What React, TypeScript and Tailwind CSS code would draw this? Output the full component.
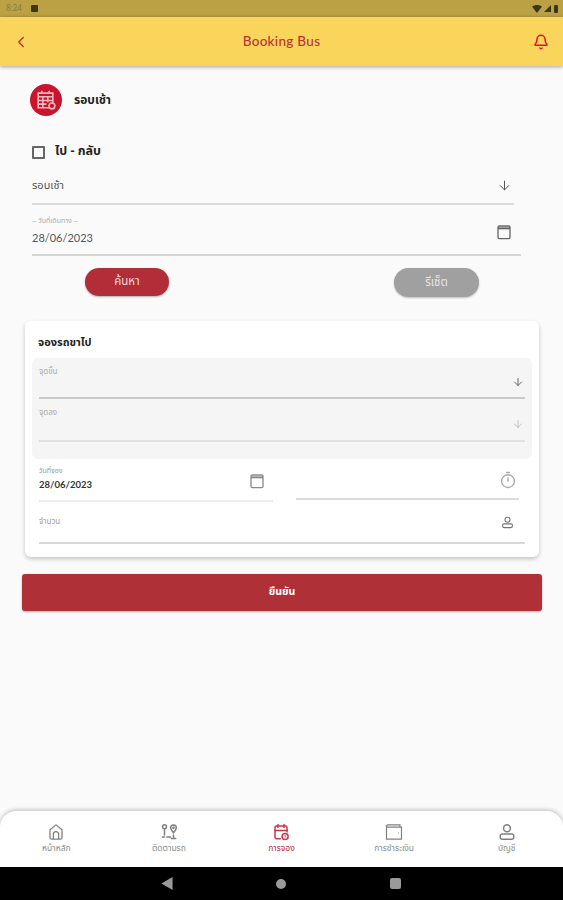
import { ArrowDown, Bell, ChevronLeft } from 'lucide-react'

const THAI = 'font-["Noto_Sans_Thai","Noto_Sans","Liberation_Sans","DejaVu_Sans",sans-serif]'

type IconProps = { className?: string }

function BookingIcon({ className }: IconProps) {
  return (
    <svg viewBox="0 0 24 24" fill="none" stroke="currentColor" strokeWidth="2" strokeLinecap="round" className={className}>
      <path d="M11 21H6a2 2 0 0 1-2-2V6a2 2 0 0 1 2-2h12a2 2 0 0 1 2 2v6" />
      <path d="M4 10h16M8 2v4M16 2v4" />
      <circle cx="17.5" cy="18" r="4" />
      <path d="M17.5 16.4v1.8l1.1.6" strokeWidth="1.3" />
    </svg>
  )
}

function SheetIcon({ className }: IconProps) {
  return (
    <svg viewBox="0 0 24 24" fill="none" stroke="currentColor" strokeWidth="1.7" className={className}>
      <path d="M3.5 4.5h16v16h-16z" />
      <path d="M3.5 8.5h16M3.5 12.5h16M3.5 16.5h9M8.5 8.5v12M14 8.5v6" />
      <path d="M7.5 2v3M15.5 2v3" />
      <circle cx="18.5" cy="18.5" r="3.2" fill="#c8142c" />
    </svg>
  )
}

function RouteIcon({ className }: IconProps) {
  return (
    <svg viewBox="0 0 24 24" fill="none" stroke="currentColor" strokeWidth="2" strokeLinecap="round" className={className}>
      <circle cx="6" cy="5" r="2.6" />
      <path d="M6 9v7" />
      <path d="M3 18.5h3M9 18.5h5" />
      <path d="M18 13c-2.6-3-3.8-4.6-3.8-6.6a3.8 3.8 0 0 1 7.6 0c0 2-1.2 3.6-3.8 6.6z" />
      <circle cx="18" cy="6.4" r="0.8" />
      <path d="M18 16v2.5M15 20.5h6" />
    </svg>
  )
}

function HomeIcon({ className }: IconProps) {
  return (
    <svg viewBox="0 0 24 24" fill="none" stroke="currentColor" strokeWidth="1.7" strokeLinejoin="round" className={className}>
      <path d="M12 2.5 4 9v10.5a2 2 0 0 0 2 2h12a2 2 0 0 0 2-2V9z" />
      <path d="M8.5 21.5V15a3.5 3.5 0 0 1 7 0v6.5" />
    </svg>
  )
}

function WalletIcon({ className }: IconProps) {
  return (
    <svg viewBox="0 0 24 24" fill="none" stroke="currentColor" strokeWidth="1.6" className={className}>
      <path d="M2 5.5h20v16H2z" />
      <path d="M2 5.5V4a1.5 1.5 0 0 1 1.5-1.5H20V5.5" />
      <path d="M17.5 13.5h.8" strokeWidth="1.8" />
    </svg>
  )
}

function PersonIcon({ className }: IconProps) {
  return (
    <svg viewBox="0 0 24 24" fill="none" stroke="currentColor" strokeWidth="2" className={className}>
      <circle cx="12" cy="7" r="4.6" />
      <path d="M5.5 14.5h13a2.5 2.5 0 0 1 2.5 2.5v1.5a3 3 0 0 1-3 3H6a3 3 0 0 1-3-3V17a2.5 2.5 0 0 1 2.5-2.5z" />
    </svg>
  )
}

function CalendarIcon({ className }: IconProps) {
  return (
    <svg viewBox="0 0 24 24" fill="none" stroke="currentColor" strokeWidth="2" className={className}>
      <path d="M5 3h14a2 2 0 0 1 2 2v15a2 2 0 0 1-2 2H5a2 2 0 0 1-2-2V5a2 2 0 0 1 2-2z" />
      <path d="M3 6.5h18" strokeWidth="3" />
    </svg>
  )
}

function StopwatchIcon({ className }: IconProps) {
  return (
    <svg viewBox="0 0 24 24" fill="none" stroke="currentColor" strokeWidth="1.8" strokeLinecap="round" className={className}>
      <circle cx="12" cy="13.5" r="8.5" />
      <path d="M10 2h4M12 9v4.5" />
    </svg>
  )
}

function NavItem({ icon, label, active }: { icon: React.ReactNode; label: string; active?: boolean }) {
  return (
    <div className={`flex w-[112.6px] flex-col items-center ${active ? 'text-[#c8384c]' : 'text-[#808080]'}`}>
      {icon}
      <span className={`mt-[2px] text-[8.5px] leading-[12px] ${active ? 'text-[#c0283c]' : 'text-[#8c8c8c]'}`}>{label}</span>
    </div>
  )
}

function CardField({ label, iconClass, lineClass, height, iconTop }: { label: string; iconClass: string; lineClass: string; height: string; iconTop: string }) {
  return (
    <div className={`mx-[7px] flex justify-between border-b-2 ${lineClass} ${height}`}>
      <span className="pt-[8px] text-[8px] leading-[12px] text-[#a8a8a8]">{label}</span>
      <ArrowDown className={`mr-[1px] h-3 w-3 ${iconTop} ${iconClass}`} strokeWidth={2} />
    </div>
  )
}

export default function App() {
  return (
    <div className={`flex h-[900px] w-[563px] flex-col overflow-hidden bg-[#fafafa] ${THAI}`}>
      <div className="flex h-[17px] items-center justify-between bg-[#bba044] pr-[5px] pl-[6px]">
        <div className="flex items-center gap-[9px]">
          <span className="text-[8px] text-[#8a7a45]">8:24</span>
          <span className="h-[7px] w-[7px] rounded-[1px] bg-[#3c3520]" />
        </div>
        <div className="flex items-center gap-[2px]">
          <svg viewBox="0 0 10 8" className="h-[8px] w-[10px] text-[#3c3520]" fill="currentColor"><path d="M0 1.5C3-.5 7-.5 10 1.5L5 8z" /></svg>
          <svg viewBox="0 0 8 8" className="h-[7px] w-[7px] text-[#3c3520]" fill="currentColor"><path d="M8 0v8H0z" /></svg>
          <span className="ml-[1px] h-[8px] w-[4px] rounded-[1px] bg-[#3c3520]" />
        </div>
      </div>

      <header className="relative z-10 flex h-[49px] items-center justify-between bg-[#fad55c] pr-[14px] pl-[12px] shadow-[0_1px_4px_rgba(0,0,0,0.35)]">
        <ChevronLeft className="h-[18px] w-[18px] text-[#c0392b]" strokeWidth={2} />
        <span className='font-["Lato",sans-serif] text-[13.5px] font-medium tracking-[0.3px] text-[#b8352f]'>Booking Bus</span>
        <Bell className="h-4 w-4 text-[#e01020]" strokeWidth={2.2} />
      </header>

      <main className="flex-1">
        <div className="mt-[18px] ml-[30px] flex items-center gap-[12px]">
          <div className="flex h-8 w-8 items-center justify-center rounded-full bg-[#c8142c] text-[#f0b8bf]">
            <SheetIcon className="h-[22px] w-[22px]" />
          </div>
          <span className="text-[12px] font-bold text-[#222222]">รอบเช้า</span>
        </div>

        <div className="mt-[29px] ml-[32px] flex items-center gap-[10px]">
          <span className="h-[13px] w-[13px] rounded-[1px] border-2 border-[#666666]" />
          <span className="text-[12.5px] font-bold leading-[14px] text-[#222222]">ไป - กลับ</span>
        </div>

        <div className="mt-[13px] ml-[32px] flex h-[33px] w-[482px] items-start justify-between border-b-2 border-[#dcdcdc] pt-[6px]">
          <span className="text-[11px] leading-[16px] text-[#555555]">รอบเช้า</span>
          <ArrowDown className="mr-[2px] h-[15px] w-[15px] text-[#555555]" strokeWidth={1.6} />
        </div>

        <div className="mt-[8px] ml-[32px] flex h-[43px] w-[489px] items-start justify-between border-b-2 border-[#d4d4d4]">
          <div className="flex flex-col pt-[2px]">
            <span className="text-[7px] leading-[12px] text-[#aaaaaa]">-- วันที่เดินทาง --</span>
            <span className='mt-[4px] font-["Lato",sans-serif] text-[11px] leading-[14px] text-[#555555]'>28/06/2023</span>
          </div>
          <CalendarIcon className="mt-[11px] mr-[9px] h-[16px] w-[16px] text-[#666666]" />
        </div>

        <div className="mt-[12px] flex pl-[85px]">
          <button className="h-[28px] w-[84px] rounded-full bg-[#b32d38] text-[11.5px] text-[#f6dcdc] shadow-[0_1px_2px_rgba(0,0,0,0.3)]">ค้นหา</button>
          <button className="ml-[225px] h-[29px] w-[85px] rounded-full bg-[#a0a0a0] text-[11.5px] text-[#e4e4e4] shadow-[0_1px_2px_rgba(0,0,0,0.25)]">รีเซ็ต</button>
        </div>

        <section className="mt-[24px] ml-[25px] h-[236px] w-[514px] rounded-[6px] bg-white shadow-[0_2px_4px_rgba(0,0,0,0.22)]">
          <h2 className="pt-[14px] pl-[13px] text-[11px] font-bold leading-[16px] text-[#222222]">จองรถขาไป</h2>
          <div className="mx-[7px] mt-[7px] h-[101px] rounded-[6px] bg-[#f5f5f5]">
            <CardField label="จุดขึ้น" iconClass="text-[#666666]" iconTop="mt-[18px]" lineClass="border-[#c8c8c8]" height="h-[41px]" />
            <CardField label="จุดลง" iconClass="text-[#c0c0c0]" iconTop="mt-[19px]" lineClass="border-[#e0e0e0]" height="h-[43px]" />
          </div>
          <div className="mt-[4px] flex pl-[14px]">
            <div className="flex h-[39px] w-[234px] justify-between border-b-2 border-[#eeeeee]">
              <div className="flex flex-col pt-[2px]">
                <span className="text-[7px] leading-[12px] text-[#9a9a9a]">วันที่จอง</span>
                <span className='mt-[1px] font-["Lato",sans-serif] text-[9.5px] font-bold leading-[14px] text-[#333333]'>28/06/2023</span>
              </div>
              <CalendarIcon className="mt-[10px] mr-[8px] h-[16px] w-[16px] text-[#8a8a8a]" />
            </div>
            <div className="ml-[23px] flex h-[37px] w-[223px] justify-end border-b-2 border-[#dcdcdc]">
              <StopwatchIcon className="mt-[8px] mr-[2px] h-[18px] w-[18px] text-[#aaaaaa]" />
            </div>
          </div>
          <div className="mx-[14px] flex h-[42px] justify-between border-b-2 border-[#d8d8d8]">
            <span className="pt-[14px] text-[8px] leading-[12px] text-[#a0a0a0]">จำนวน</span>
            <PersonIcon className="mt-[14px] mr-[11px] h-[13px] w-[13px] text-[#777777]" />
          </div>
        </section>

        <button className="mt-[17px] ml-[22px] h-[37px] w-[520px] rounded-[3px] bg-[#b03038] text-[10.5px] font-bold text-white shadow-[0_1px_2px_rgba(0,0,0,0.3)]">ยืนยัน</button>
      </main>

      <nav className="flex h-[56px] rounded-t-[16px] bg-white pt-[12px] shadow-[0_-1px_4px_rgba(0,0,0,0.25)]">
        <NavItem icon={<HomeIcon className="h-[18px] w-[18px]" />} label="หน้าหลัก" />
        <NavItem icon={<RouteIcon className="h-[18px] w-[18px]" />} label="ติดตามรถ" />
        <NavItem active icon={<BookingIcon className="h-[18px] w-[18px]" />} label="การจอง" />
        <NavItem icon={<WalletIcon className="h-[18px] w-[18px]" />} label="การชำระเงิน" />
        <NavItem icon={<PersonIcon className="h-[18px] w-[18px]" />} label="บัญชี" />
      </nav>

      <div className="flex h-[33px] items-center bg-black pl-[161px]">
        <svg viewBox="0 0 12 14" className="h-[13px] w-[12px] text-[#9a9a9a]" fill="currentColor"><path d="M12 0v14L0 7z" /></svg>
        <span className="ml-[103px] h-[10px] w-[10px] rounded-full bg-[#9a9a9a]" />
        <span className="ml-[104px] h-[11px] w-[11px] rounded-[2px] bg-[#9a9a9a]" />
      </div>
    </div>
  )
}
